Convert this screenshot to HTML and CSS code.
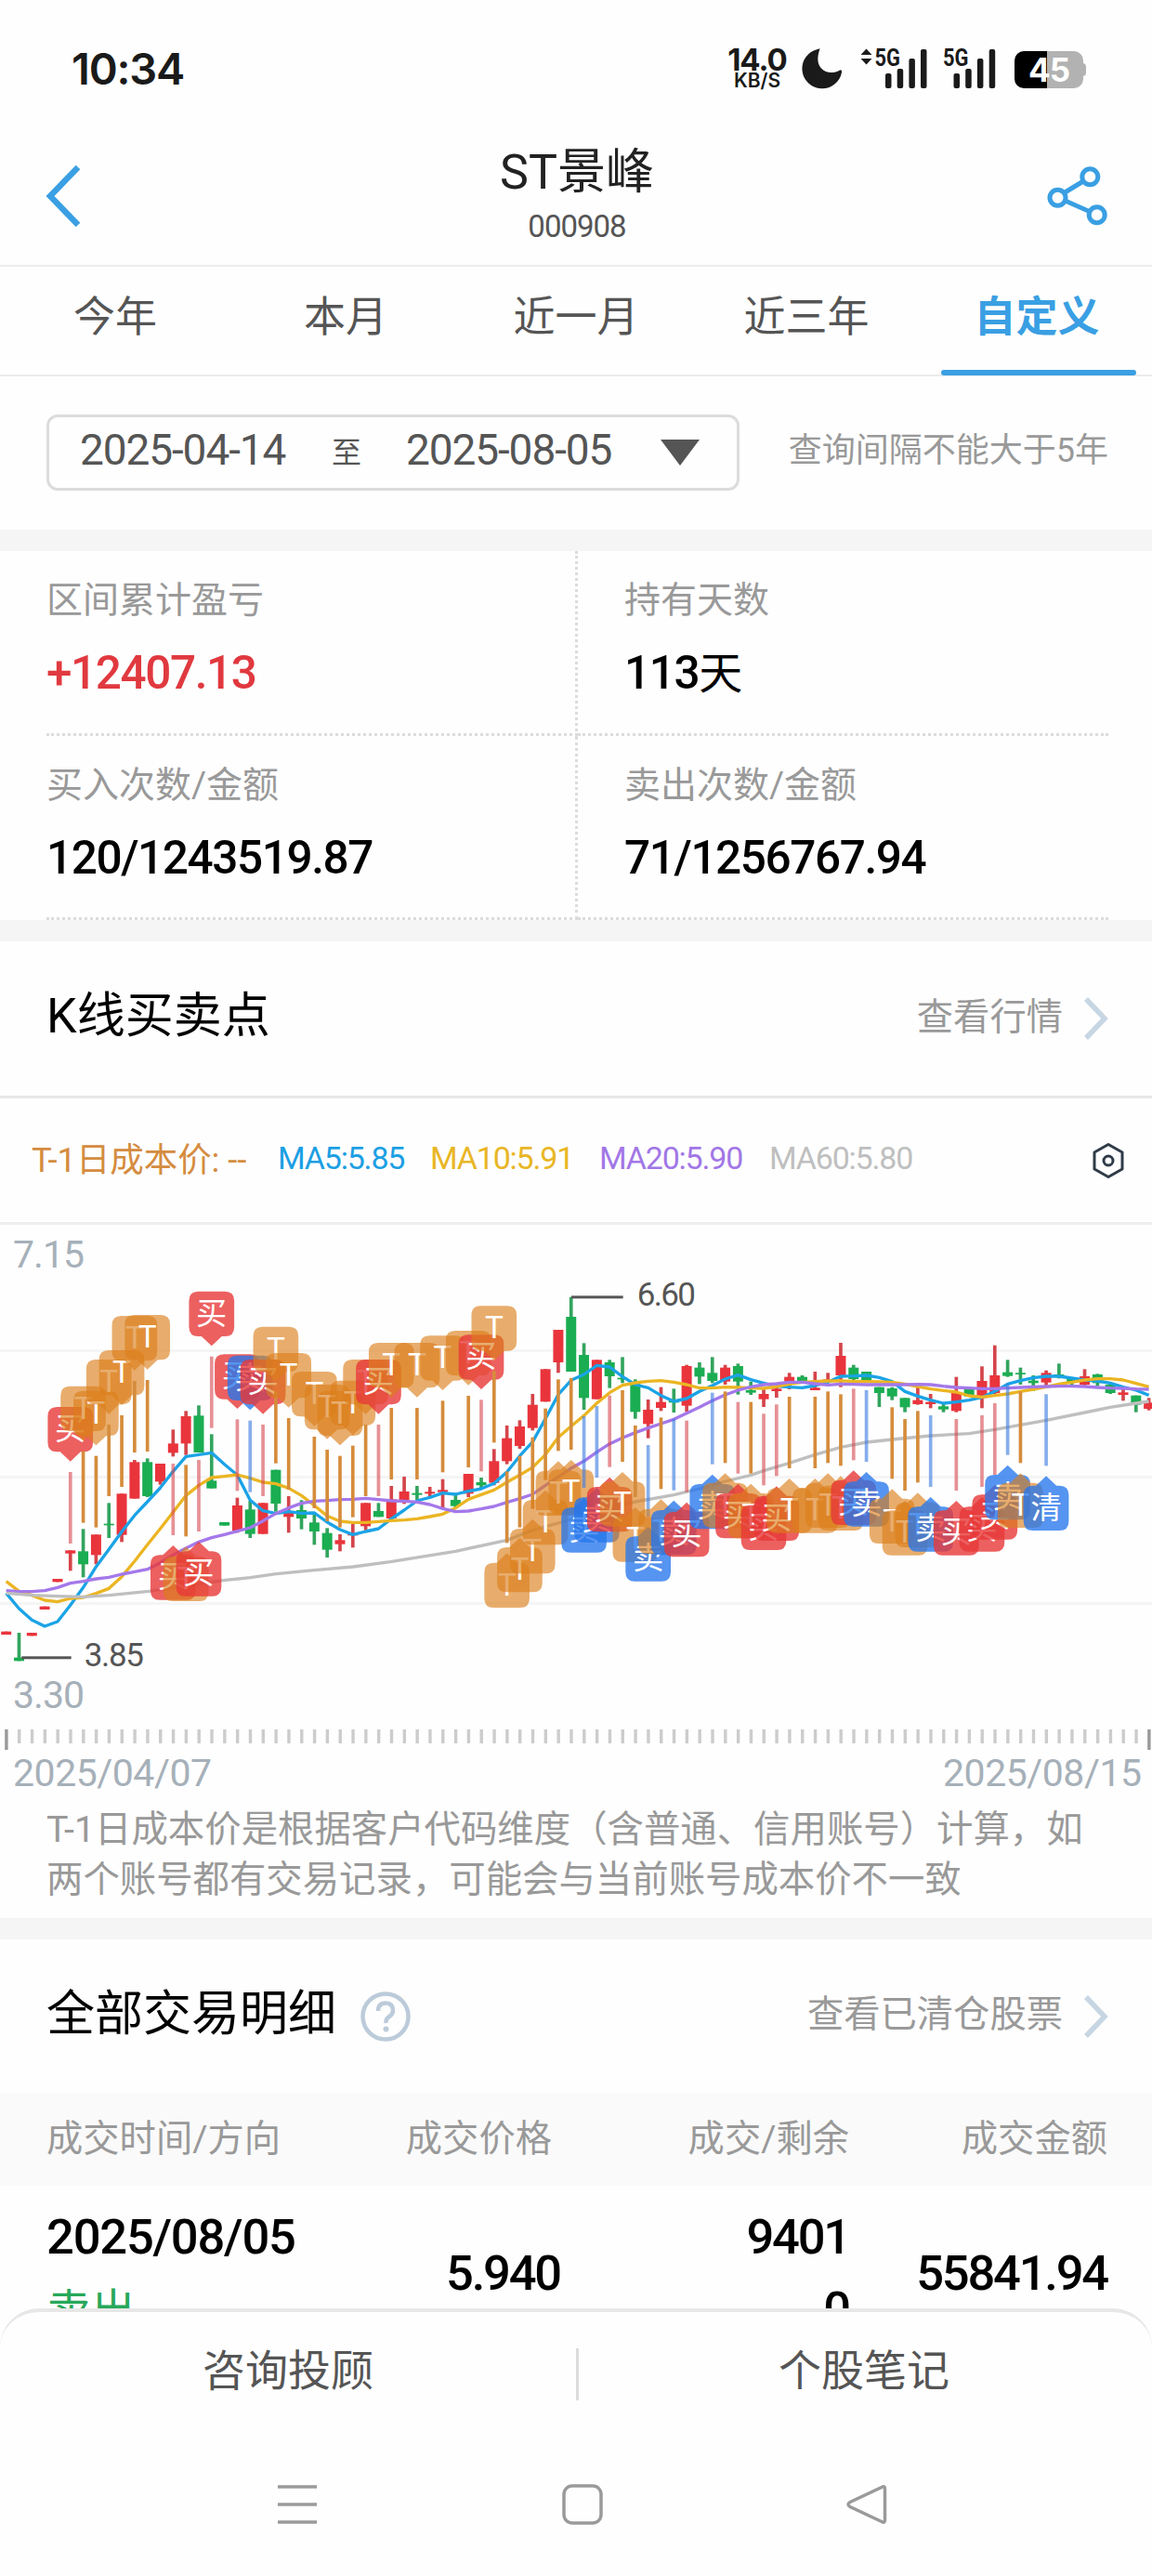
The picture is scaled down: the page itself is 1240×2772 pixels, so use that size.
FILE: index.html
```html
<!DOCTYPE html>
<html lang="zh-CN">
    <head>
        <meta charset="UTF-8">
        <meta name="viewport" content="width=device-width, initial-scale=1.0">
        <title>ST景峰 000908</title>
        <link rel="stylesheet" href="styles.css">
    </head>

    <body>
        <div class="statusbar">
            <div class="clock">10:34</div>
            <div class="status-icons">
                <div class="speed"><b>14.0</b><span>KB/S</span></div>
                <svg class="moon" width="44" height="44" viewBox="0 0 44 44">
                    <path d="M19.5 0.5C16 10 17 17 21 21.500C26 27 34 27.500 41 23.500Q43.500 22.500 43 26A21.500 21.500 0 1 1 17 0.900Q20 0 19.500 .5Z" fill="#1a1a1a"/>
                </svg>
                <svg class="signal" width="72" height="44" viewBox="0 0 72 44">
                    <path d="M0.500 7L6.500 .5L12.500 7ZM0.500 11H12.500L6.500 17.500Z" fill="#1a1a1a"/>
                    <text x="15.500" y="18.500" textLength="27.500" lengthAdjust="spacingAndGlyphs">5G</text>
                    <rect x="27" y="27" width="6.500" height="16" rx="2"/>
                    <rect x="39.700" y="22" width="6.500" height="21" rx="2"/>
                    <rect x="52.400" y="11" width="6.500" height="32" rx="2"/>
                    <rect x="65" y="1" width="6.500" height="42" rx="2"/>
                </svg>
                <svg class="signal second" width="57" height="44" viewBox="0 0 57 44">
                    <text x="0" y="18.500" textLength="27.500" lengthAdjust="spacingAndGlyphs">5G</text>
                    <rect x="11.500" y="27" width="6.500" height="16" rx="2"/>
                    <rect x="24.200" y="22" width="6.500" height="21" rx="2"/>
                    <rect x="36.900" y="11" width="6.500" height="32" rx="2"/>
                    <rect x="49.700" y="1" width="6.500" height="42" rx="2"/>
                </svg>
                <div class="battery">45</div>
            </div>
        </div>

        <div class="header">
            <svg class="back" width="40" height="68" viewBox="0 0 40 68">
                <path d="M37 3L7 34L37 65" fill="none" stroke="#3a9fe3" stroke-width="6.500"/>
            </svg>
            <div class="title">
                <h1>ST景峰</h1>
                <p>000908</p>
            </div>
            <svg class="share" width="66" height="66" viewBox="0 0 66 66">
                <g fill="none" stroke="#3a9fe3" stroke-width="5">
                    <circle cx="46.300" cy="11.300" r="8.500"/>
                    <circle cx="11.500" cy="33.700" r="8.500"/>
                    <circle cx="53.700" cy="52.300" r="8.500"/>
                    <path d="M18.500 28.500L39 16M19.500 37L45.500 48.500"/>
                </g>
            </svg>
        </div>

        <div class="tabs">
            <a>今年</a>
            <a>本月</a>
            <a>近一月</a>
            <a>近三年</a>
            <a class="active">自定义</a>
        </div>

        <div class="range">
            <div class="datebox">
                <span>2025-04-14</span>
                <small>至</small>
                <span>2025-08-05</span>
                <i class="caret"></i>
            </div>
            <p>查询间隔不能大于5年</p>
        </div>
        <div class="band"></div>

        <div class="stats">
            <div class="cell"><label>区间累计盈亏</label><strong class="up">+12407.13</strong></div>
            <div class="cell"><label>持有天数</label><strong>113<span>天</span></strong></div>
            <div class="cell"><label>买入次数/金额</label><strong>120/1243519.87</strong></div>
            <div class="cell"><label>卖出次数/金额</label><strong>71/1256767.94</strong></div>
        </div>
        <div class="band"></div>

        <div class="section-head kline-head">
            <h2>K线买卖点</h2>
            <a>查看行情</a>
            <svg width="28" height="46" viewBox="0 0 28 46"><path d="M3 2L23 23L3 44" fill="none" stroke="#c7d6e3" stroke-width="5.500"/></svg>
        </div>

        <div class="legend">
            <span class="cost">T-1日成本价: --</span>
            <span class="ma5">MA5:5.85</span>
            <span class="ma10">MA10:5.91</span>
            <span class="ma20">MA20:5.90</span>
            <span class="ma60">MA60:5.80</span>
            <svg width="36" height="40" viewBox="0 0 36 40">
                <g fill="none" stroke="#2f3b48" stroke-width="3">
                    <path d="M18 2.500L33 11V29L18 37.500L3 29V11Z" stroke-linejoin="round"/>
                    <circle cx="18" cy="20" r="5"/>
                </g>
            </svg>
        </div>

        <svg id="chart" class="chart" width="1240" height="612" viewBox="0 0 1240 612">
            <path d="M0 135.500H1240M0 271.500H1240M0 407.500H1240" stroke="#f5f5f5" stroke-width="3"/>
            <g id="plot" transform="translate(0 62) scale(.33333)"></g>
            <g class="axis">
                <text x="14" y="45.500" textLength="77">7.15</text>
                <text x="14" y="520" textLength="77">3.30</text>
                <text x="14" y="604" textLength="214">2025/04/07</text>
                <text x="1015" y="604" textLength="214">2025/08/15</text>
            </g>
            <g id="ticks"></g>
        </svg>

        <p class="note">T-1日成本价是根据客户代码维度（含普通、信用账号）计算，如<br>两个账号都有交易记录，可能会与当前账号成本价不一致</p>
        <div class="band"></div>

        <div class="section-head">
            <h2>全部交易明细</h2>
            <svg class="help" width="54" height="54" viewBox="0 0 54 54">
                <circle cx="27" cy="27" r="24.500" fill="none" stroke="#bccbda" stroke-width="4.500"/>
                <path d="M19 21Q19 12.500 27 12.500T35 20.500Q35 24.500 31 27T27.500 34" fill="none" stroke="#bccbda" stroke-width="4.500"/>
                <circle cx="27.500" cy="40.500" r="3" fill="#bccbda"/>
            </svg>
            <a>查看已清仓股票</a>
            <svg width="28" height="46" viewBox="0 0 28 46"><path d="M3 2L23 23L3 44" fill="none" stroke="#c7d6e3" stroke-width="5.500"/></svg>
        </div>

        <div class="row thead">
            <span>成交时间/方向</span>
            <span>成交价格</span>
            <span>成交/剩余</span>
            <span>成交金额</span>
        </div>
        <div class="row trade">
            <span class="time">2025/08/05<br><em>卖出</em></span>
            <span class="price">5.940</span>
            <span>9401<br>0</span>
            <span class="amount">55841.94</span>
        </div>

        <div class="actions">
            <a>咨询投顾</a>
            <a>个股笔记</a>
        </div>

        <div class="navbar">
            <svg width="44" height="44" viewBox="0 0 44 44"><path d="M1 3H43M1 22H43M1 41H43"/></svg>
            <svg width="44" height="44" viewBox="0 0 44 44"><rect x="2" y="2" width="40" height="40" rx="9"/></svg>
            <svg width="44" height="44" viewBox="0 0 44 44"><path d="M38 3.500Q41.500 1.500 41.500 5V39Q41.500 42.500 38 40.500L4 24.500Q0 22 4 19.500Z"/></svg>
        </div>

        <script src="chart.js"></script>
    </body>
</html>
```
FILE: styles.css
```css
body {
    font-family: Roboto, "Noto Sans CJK SC", sans-serif;
    margin: 0;
    padding: 0;
    width: 1240px;
    height: 2772px;
    overflow: hidden;
    background-color: #fefefe;
    color: #000;
}
h1, h2, p {
    margin: 0;
    font-weight: 400;
}
svg {
    display: block;
    flex: none;
    overflow: visible;
}
.statusbar {
    display: flex;
    justify-content: space-between;
    height: 148px;
    box-sizing: border-box;
    padding: 0 71px 0 77px;
    color: #1a1a1a;
}
.clock {
    font-family: Inter, sans-serif;
    font-weight: 600;
    font-size: 47px;
    line-height: 148px;
    letter-spacing: -1.2px;
}
.status-icons {
    display: flex;
    padding-top: 52px;
}
.speed {
    width: 66px;
    margin-right: 15px;
    font-family: Inter, sans-serif;
    text-align: center;
    white-space: nowrap;
}
.speed b {
    display: block;
    font-size: 33px;
    font-weight: 700;
    line-height: 25px;
    letter-spacing: -1px;
}
.speed span {
    display: block;
    font-size: 21px;
    font-weight: 600;
    line-height: 20px;
}
.moon {
    margin-right: 19px;
}
.signal text {
    font: 700 25px Roboto, sans-serif;
}
.signal {
    fill: #1a1a1a;
}
.second {
    margin-left: 17px;
}
.battery {
    position: relative;
    width: 74px;
    height: 40px;
    margin: 3px 3px 0 20px;
    border-radius: 10px;
    background: linear-gradient(90deg, #000 35px, #b2b2b2 35px);
    color: #fff;
    font: 700 35px/40px Inter, sans-serif;
    letter-spacing: -1px;
    text-align: center;
}
.battery::after {
    content: "";
    position: absolute;
    right: -3px;
    top: 13px;
    width: 5px;
    height: 14px;
    border-radius: 0 4px 4px 0;
    background: #b2b2b2;
}
.header {
    display: flex;
    justify-content: space-between;
    height: 137px;
    padding: 0 47px;
    border-bottom: 2px solid #ececec;
}
.back {
    margin-top: 29px;
}
.share {
    margin-top: 31px;
}
.title {
    text-align: center;
    padding: 8px 0 0 28px;
}
.title h1 {
    font-size: 52px;
    line-height: 60px;
    color: #222;
}
.title p {
    font-size: 33px;
    line-height: 40px;
    padding-top: 8px;
    letter-spacing: -1px;
    color: #555;
}
.tabs {
    display: grid;
    grid-template-columns: repeat(5, 248px);
    height: 116px;
    border-bottom: 2px solid #ececec;
}
.tabs a {
    position: relative;
    font-size: 45px;
    line-height: 110px;
    text-align: center;
    color: #555;
}
.tabs .active {
    color: #3a9fe3;
    font-weight: 600;
}
.tabs .active::after {
    content: "";
    position: absolute;
    left: 21px;
    bottom: -1px;
    width: 210px;
    height: 6px;
    border-radius: 3px;
    background: #3a9fe3;
}
.range {
    display: flex;
    justify-content: space-between;
    height: 165px;
    padding: 0 47px 0 50px;
    box-sizing: border-box;
}
.datebox {
    display: flex;
    align-items: center;
    width: 746px;
    height: 82px;
    margin-top: 41px;
    padding: 0 40px 6px 33px;
    box-sizing: border-box;
    border: 3px solid #dcdcdc;
    border-radius: 12px;
    font-size: 46px;
    letter-spacing: -1.1px;
    color: #555;
}
.datebox span {
    width: 222px;
    white-space: nowrap;
}
.datebox small {
    width: 129px;
    font-size: 32px;
    text-align: center;
}
.caret {
    margin: 6px 0 0 52px;
    border: 21px solid transparent;
    border-top: 28px solid #555;
    border-bottom: 0;
}
.range p {
    font-size: 36px;
    line-height: 160px;
    color: #999;
}
.band {
    height: 23px;
    background: #f5f5f5;
}
.stats {
    display: grid;
    grid-template-columns: 572px 571px;
    grid-template-rows: 199px 198px;
    margin-left: 50px;
}
.cell {
    box-sizing: border-box;
    padding-top: 28px;
    border-bottom: 3px dotted #dcdcdc;
}
.cell:nth-child(odd) {
    border-right: 3px dotted #dcdcdc;
}
.cell:nth-child(even) {
    padding-left: 50px;
}
.cell label {
    display: block;
    font-size: 39px;
    line-height: 50px;
    color: #999;
}
.cell strong {
    display: block;
    margin-top: 23px;
    font-size: 49.5px;
    font-weight: 500;
    line-height: 60px;
    letter-spacing: -1.4px;
}
.cell strong span {
    font-weight: 400;
    font-size: 47px;
}
.cell .up {
    color: #e0393f;
}
.section-head {
    display: flex;
    align-items: center;
    height: 165px;
    padding: 0 46px 0 50px;
}
.section-head h2 {
    font-size: 52px;
    line-height: 70px;
    margin-top: -4px;
}
.section-head a {
    margin-left: auto;
    margin-right: 22px;
    margin-top: -12px;
    font-size: 39.3px;
    color: #999;
}
.section-head .help {
    margin-left: 26px;
}
.kline-head {
    height: 166px;
    border-bottom: 3px solid #e7e7e7;
}
.legend {
    display: flex;
    align-items: center;
    height: 133px;
    padding: 0 29px 0 34px;
    border-bottom: 3px solid #eee;
    font-size: 34px;
    letter-spacing: -1.2px;
    white-space: nowrap;
}
.legend span {
    margin-top: -6px;
}
.legend .cost {
    width: 265px;
    font-size: 36.5px;
    letter-spacing: -.1px;
    color: #d48c40;
}
.legend .ma5 {
    width: 164px;
    color: #1c9fe3;
}
.legend .ma10 {
    width: 182px;
    color: #e9b626;
}
.legend .ma20 {
    width: 183px;
    color: #a277e6;
}
.legend .ma60 {
    color: #bfbfbf;
}
.legend svg {
    margin-left: auto;
}
.chart text {
    font-family: Roboto, "Noto Sans CJK SC", sans-serif;
}
.axis text {
    font-size: 41px;
    fill: #a6b0b9;
}
.note {
    height: 134px;
    box-sizing: border-box;
    padding: 12px 0 0 50px;
    font-size: 39.4px;
    line-height: 53.5px;
    white-space: nowrap;
    color: #999;
}
.row {
    display: grid;
    grid-template-columns: 250px 294px 320px 278px;
    align-items: center;
    padding-left: 50px;
    text-align: right;
    white-space: nowrap;
}
.row span:first-child {
    text-align: left;
}
.thead {
    height: 100px;
    background: #fafafa;
    font-size: 39.3px;
    color: #999;
}
.thead span {
    margin-top: -10px;
}
.trade {
    height: 132px;
    padding-top: 16px;
    box-sizing: border-box;
    overflow: hidden;
    align-items: start;
    font-size: 52.5px;
    font-weight: 500;
    line-height: 78px;
    letter-spacing: -2.2px;
}
.trade .time {
    letter-spacing: -1.2px;
}
.trade em {
    font-style: normal;
    font-weight: 400;
    font-size: 48px;
    letter-spacing: 0;
    color: #27a85a;
}
.trade .price, .trade .amount {
    line-height: 156px;
}
.trade .price {
    margin-right: -9px;
}
.actions {
    display: flex;
    height: 130px;
    border: 0 solid #e7e7e7;
    border-top-width: 4px;
    border-radius: 42px 42px 0 0;
    box-sizing: border-box;
    background: #fefefe;
}
.actions a {
    position: relative;
    flex: 1;
    font-size: 46px;
    line-height: 127px;
    text-align: center;
    color: #555;
}
.actions a + a::before {
    content: "";
    position: absolute;
    left: 0;
    top: 39px;
    width: 3px;
    height: 56px;
    background: #dcdcdc;
}
.navbar {
    display: flex;
    justify-content: space-between;
    padding: 59px 285px 0 298px;
    fill: none;
    stroke: #9a9a9a;
    stroke-width: 3.500;
}
```
FILE: chart.js
```js
const NS = "http://www.w3.org/2000/svg";
const plot = document.getElementById("plot");
const X = i => 20 + i * 41.46;

function add(parent, tag, attrs, text) {
    const el = document.createElementNS(NS, tag);
    for (const k in attrs) el.setAttribute(k, attrs[k]);
    if (text) el.textContent = text;
    parent.appendChild(el);
    return el;
}

// colour, body top, body bottom, high, low
const candles = [
    ["r",1127,1137,1127,1137],["g",1211,1222,1131,1222],["r",1131,1141,1131,1141],["r",1046,1056,1046,1056],["r",957,967,957,967],
    ["r",865,875,865,931],["g",868,910,796,952],["r",814,880,814,910],["g",779,784,712,825],["r",682,815,682,838],
    ["r",580,698,573,698],["g",580,690,568,693],["r",585,643,585,653],["r",520,550,475,562],["r",432,520,415,557],
    ["g",430,549,397,549],["g",640,665,490,665],["g",774,785,774,785],["r",720,802,695,808],["g",733,812,705,825],
    ["r",712,812,712,812],["g",605,714,605,740],["r",740,757,690,808],["g",735,762,703,797],["g",775,804,745,847],
    ["g",809,863,793,888],["r",832,845,813,868],["r",812,817,780,856],["r",712,787,712,800],["g",738,757,712,757],
    ["r",700,762,657,762],["r",675,702,627,715],["g",680,686,657,703],["r",676,682,660,690],["r",670,677,635,728],
    ["g",702,722,680,728],["r",618,682,618,693],["g",645,655,630,665],["r",577,647,538,655],["r",503,577,462,587],
    ["r",465,528,445,537],["r",395,470,360,478],["r",280,385,280,385],["r",153,258,153,292],["g",111,288,47,288],
    ["g",234,373,196,411],["r",250,377,250,377],["g",258,303,250,341],["g",308,313,241,325],["g",325,418,313,440],
    ["r",411,457,378,503],["r",386,405,338,415],["g",380,388,343,420],["r",270,398,266,418],["g",275,304,258,328],
    ["g",292,318,241,325],["r",275,320,266,330],["g",270,320,262,362],["g",348,356,320,363],["r",360,377,343,402],
    ["r",343,351,335,372],["r",305,320,292,345],["g",305,318,300,325],["r",340,348,288,348],["r",313,320,292,325],
    ["r",237,300,195,338],["g",275,312,266,316],["g",288,318,288,318],["g",338,357,338,402],["g",342,368,338,380],
    ["g",373,403,373,419],["r",380,393,338,395],["r",386,393,360,406],["g",400,410,388,419],["r",355,415,305,419],
    ["g",343,368,343,368],["r",318,373,271,406],["r",300,357,203,360],["g",290,302,250,305],["g",292,297,275,330],
    ["g",317,325,300,350],["r",292,323,284,333],["g",297,303,262,310],["g",312,322,308,330],["r",303,330,280,333],
    ["g",297,325,295,335],["g",330,357,325,360],["r",355,363,345,382],["g",365,395,365,419],["r",388,408,373,413]
];
candles.forEach(([c, top, bottom, high, low], i) => {
    const fill = c === "r" ? "#e9343c" : "#1bad52";
    add(plot, "rect", {x: X(i) - 5.5, y: high, width: 11, height: low - high, fill: c === "r" ? "#d4454b" : "#33a45e"});
    add(plot, "rect", {x: X(i) - 16.5, y: top, width: 33, height: bottom - top, fill});
});

const ma60 = [[20,1003],[103,1010],[187,1013],[269,1015],[352,1010],[480,997],[720,962],[808,953],[891,941],[1015,929],[1140,918],[1260,902],
    [1471,868],[1637,832],[1720,800],[1845,765],[1928,735],[2052,708],[2176,686],[2259,666],[2342,642],[2425,622],[2466,608],[2549,583],
    [2632,556],[2715,532],[2798,516],[2880,507],[3005,495],[3129,488],[3212,475],[3295,460],[3379,445],[3503,420],[3585,403],[3669,390],[3710,384]];
const ma5 = [1003,1053,1090,1110,1095,1042,985,918,862,805,752,708,663,610,562,556,550,587,622,703,737,746,740,745,744,774,798,814,804,795,
    763,735,705,694,680,684,674,666,649,612,560,515,440,362,316,297,268,273,304,330,340,365,384,375,352,333,312,299,314,325,
    335,338,340,333,322,303,302,300,307,320,352,367,380,390,386,380,371,352,328,317,308,303,303,309,315,318,325,338,348,364];
const ma10 = [965,997,1010,1026,1031,1020,1017,1004,988,950,900,847,795,742,688,655,630,626,621,632,645,650,664,688,720,754,771,775,775,772,
    769,767,763,756,748,728,700,685,670,645,622,597,556,500,464,430,390,356,332,324,319,317,322,330,341,341,338,339,341,342,
    336,328,322,320,318,318,319,320,321,322,328,336,344,349,354,366,370,365,360,352,345,337,328,322,315,311,311,315,326,337];
const ma20 = [995,998,998,995,985,971,965,957,952,942,934,926,905,880,858,838,824,814,803,792,770,746,728,713,706,704,701,700,697,701,
    705,706,709,717,730,740,738,731,723,710,698,684,655,628,600,577,548,521,502,485,470,456,442,422,403,382,363,348,337,330,
    327,322,322,327,331,328,329,330,330,330,330,329,330,335,339,341,343,343,341,339,337,336,335,335,336,339,341,342,344,345];

function line(points, stroke) {
    add(plot, "polyline", {points: points.join(" "), fill: "none", stroke, "stroke-width": 10, "stroke-linejoin": "round"});
}
line(ma5.map((y, i) => [X(i), y]), "#1ba3e6");
line(ma10.map((y, i) => [X(i), y]), "#ebb523");
line(ma20.map((y, i) => [X(i), y]), "#a478ea");
line(ma60, "#bfbfbf");

const kinds = {
    T: {label: "T", fill: "rgba(219,126,26,.64)", stem: "#d58c3c"},
    B: {label: "买", fill: "rgba(231,56,56,.8)", stem: "rgba(214,70,78,.6)"},
    S: {label: "卖", fill: "rgba(37,118,236,.78)", stem: "rgba(60,125,225,.62)"},
    C: {label: "清", fill: "rgba(37,118,236,.78)", stem: "rgba(60,125,225,.62)"}
};
// day, kind, stem top, 1 when the tag hangs below the candle
const marks = [
    [5,"B",612],[6,"T",545],[7,"T",560],[8,"T",459],[9,"T",429],[10,"T",318],[11,"T",315],
    [13,"B",585,1],[14,"T",589,1],[15,"B",573,1],
    [16,"B",239],[18,"B",442],[19,"S",446],[20,"B",459],[21,"T",353],[22,"T",438],[24,"T",498],[25,"T",540],[26,"T",560],[27,"T",527],
    [28,"T",459],[29,"B",459],[30,"T",405],[32,"T",405],[34,"T",382],[36,"T",366],[37,"B",379],[38,"T",286],
    [39,"T",610,1],[40,"T",560,1],[41,"T",500,1],[42,"T",407,1],[43,"T",313,1],[44,"T",309,1],[45,"S",432,1],[46,"S",399,1],[47,"B",365,1],
    [48,"T",348,1],[49,"T",462,1],[50,"S",525,1],[51,"T",436,1],[52,"S",440,1],[53,"B",446,1],[55,"S",356,1],[56,"T",352,1],[57,"B",386,1],
    [58,"T",386,1],[59,"B",424,1],[60,"B",394,1],[61,"T",369,1],[63,"T",369,1],[64,"T",352,1],[65,"T",361,1],[66,"B",343,1],[67,"S",348,1],
    [69,"T",403,1],[70,"T",441,1],[71,"T",415,1],[72,"S",429,1],[74,"B",441,1],[76,"B",429,1],[77,"B",390,1],[78,"S",326,1],[79,"T",352,1],[81,"C",361,1]
];
marks.forEach(([i, kind, y, below]) => {
    const k = kinds[kind];
    const x = X(i);
    const top = below ? y + 295 : y - 210;
    const up = below ? "l33 -31l33 31" : "h66";
    const down = below ? "h-66" : "l-33 31l-33 -31";
    add(plot, "rect", {x: x - 5.5, y, width: 11, height: 231, fill: k.stem});
    add(plot, "path", {
        d: `M${x - 73} ${top + 30}q0 -30 30 -30h10${up}h10q30 0 30 30v85q0 30 -30 30h-10${down}h-10q-30 0 -30 -30z`,
        fill: k.fill
    });
    add(plot, "text", {x, y: top + 105, "font-size": 100, "text-anchor": "middle", fill: "#fff"}, k.label);
});

// highest and lowest price callouts
add(plot, "rect", {x: 1845, y: 43, width: 167, height: 9, fill: "#555"});
add(plot, "text", {x: 2057, y: 75, "font-size": 105, textLength: 190, fill: "#555"}, "6.60");
add(plot, "rect", {x: 70, y: 1207, width: 160, height: 9, fill: "#555"});
add(plot, "text", {x: 272, y: 1240, "font-size": 105, textLength: 193, fill: "#555"}, "3.85");

const ticks = document.getElementById("ticks");
for (let i = 0; i < 90; i++) {
    const end = i === 0 || i === 89;
    add(ticks, "rect", {x: 5.2 + i * 13.82, y: 543, width: 3.4, height: end ? 22 : 15, fill: end ? "#999" : "#ccc"});
}
```
